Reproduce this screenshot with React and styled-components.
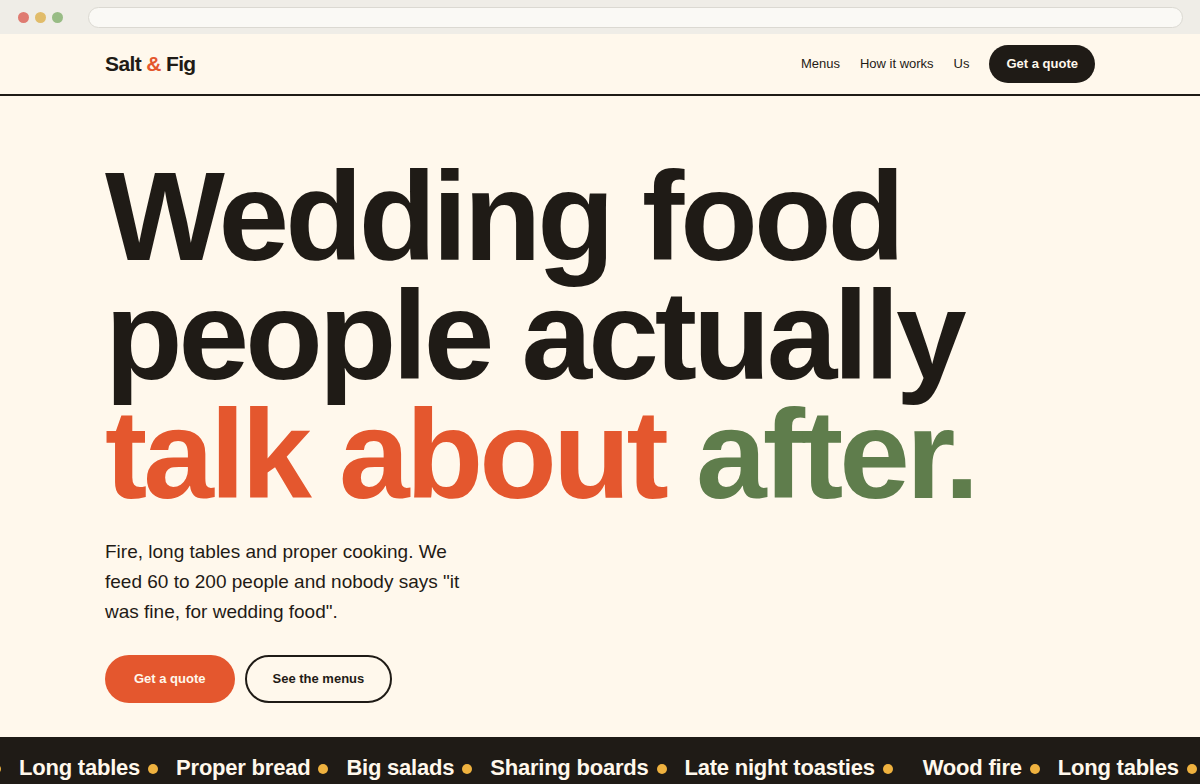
import styled, { createGlobalStyle } from "styled-components";

const DISHES = [
    "Wood fire",
    "Long tables",
    "Proper bread",
    "Big salads",
    "Sharing boards",
    "Late night toasties",
];

export default function App() {
    return (
        <>
            <GlobalStyle />
            <BrowserBar>
                <Lights>
                    <Light $color="#df7b71" />
                    <Light $color="#e1bc6a" />
                    <Light $color="#98bc85" />
                </Lights>
                <AddressInput type="text" aria-label="Address" />
            </BrowserBar>
            <Header>
                <HeaderInner>
                    <Logo href="#">
                        Salt <span>&amp;</span> Fig
                    </Logo>
                    <Nav>
                        <a href="#menus">Menus</a>
                        <a href="#how">How it works</a>
                        <a href="#us">Us</a>
                        <NavButton>Get a quote</NavButton>
                    </Nav>
                </HeaderInner>
            </Header>
            <Hero>
                <Title>
                    Wedding food people actually <Accent $color="#e4572e">talk about</Accent>{" "}
                    <Accent $color="#5f7d4c">after.</Accent>
                </Title>
                <Intro>
                    Fire, long tables and proper cooking. We feed 60 to 200 people and nobody
                    says "it was fine, for wedding food".
                </Intro>
                <Actions>
                    <PrimaryButton>Get a quote</PrimaryButton>
                    <OutlineButton>See the menus</OutlineButton>
                </Actions>
            </Hero>
            <Marquee>
                <MarqueeTrack>
                    <DishGroup />
                    <DishGroup />
                </MarqueeTrack>
            </Marquee>
        </>
    );
}

function DishGroup() {
    return (
        <DishList>
            {DISHES.map((dish) => (
                <Dish key={dish}>{dish}</Dish>
            ))}
        </DishList>
    );
}

const GlobalStyle = createGlobalStyle`
    * {
        box-sizing: border-box;
    }
    body {
        margin: 0;
        background-color: #fff8ec;
        color: #1f1b16;
        font-family: "Liberation Sans", Arial, sans-serif;
        overflow-x: hidden;
    }
    a {
        color: inherit;
        text-decoration: none;
    }
`;

const BrowserBar = styled.div`
    display: flex;
    align-items: center;
    gap: 25px;
    height: 34px;
    padding: 0 17px 0 18px;
    background-color: #efede7;
`;
const Lights = styled.div`
    display: flex;
    gap: 6px;
`;
const Light = styled.span`
    width: 11px;
    height: 11px;
    border-radius: 50%;
    background-color: ${(props) => props.$color};
`;
const AddressInput = styled.input`
    flex: 1;
    height: 21px;
    padding: 0 12px;
    border: 1px solid #dbd9d2;
    border-radius: 11px;
    background-color: #faf9f5;
    outline: none;
`;

const Header = styled.header`
    border-bottom: 2px solid #1f1b16;
`;
const HeaderInner = styled.div`
    display: flex;
    align-items: center;
    justify-content: space-between;
    max-width: 990px;
    margin: 0 auto;
    padding: 11px 0;
`;
const Logo = styled.a`
    font-size: 21px;
    font-weight: 700;
    letter-spacing: -0.03em;
    span {
        color: #e4572e;
    }
`;
const Nav = styled.nav`
    display: flex;
    align-items: center;
    gap: 20px;
    font-size: 13px;
    a {
        padding-bottom: 2px;
    }
`;

const Button = styled.button`
    border: none;
    border-radius: 24px;
    font-family: inherit;
    font-size: 13px;
    font-weight: 700;
    cursor: pointer;
`;
const NavButton = styled(Button)`
    height: 38px;
    padding: 0 17px 2px;
    background-color: #1f1b16;
    color: #fff8ec;
`;
const PrimaryButton = styled(Button)`
    height: 48px;
    padding: 0 29px 2px;
    background-color: #e4572e;
    color: #fff8ec;
`;
const OutlineButton = styled(Button)`
    height: 48px;
    padding: 0 26px 2px;
    border: 2px solid #1f1b16;
    background-color: transparent;
    color: #1f1b16;
`;

const Hero = styled.main`
    max-width: 990px;
    margin: 0 auto;
    padding: 61px 0 34px;
`;
const Title = styled.h1`
    margin: 0;
    font-size: 127px;
    font-weight: 700;
    line-height: 119px;
    letter-spacing: -4px;
`;
const Accent = styled.span`
    color: ${(props) => props.$color};
`;
const Intro = styled.p`
    max-width: 380px;
    margin: 23px 0 28px;
    font-size: 19px;
    line-height: 30px;
`;
const Actions = styled.div`
    display: flex;
    gap: 10px;
`;

const Marquee = styled.section`
    overflow: hidden;
    padding: 18px 0;
    background-color: #1f1b16;
    color: #fff8ec;
`;
const MarqueeTrack = styled.div`
    display: flex;
    width: max-content;
    margin-left: -116px;
`;
const DishList = styled.ul`
    display: flex;
    gap: 18px;
    margin: 0;
    padding: 0 30px 0 0;
    list-style: none;
`;
const Dish = styled.li`
    display: flex;
    align-items: center;
    gap: 8px;
    font-size: 22px;
    font-weight: 700;
    line-height: 26px;
    letter-spacing: -0.01em;
    white-space: nowrap;
    &::after {
        content: "";
        width: 10px;
        height: 10px;
        margin-top: 2px;
        border-radius: 50%;
        background-color: #efb23f;
    }
`;
